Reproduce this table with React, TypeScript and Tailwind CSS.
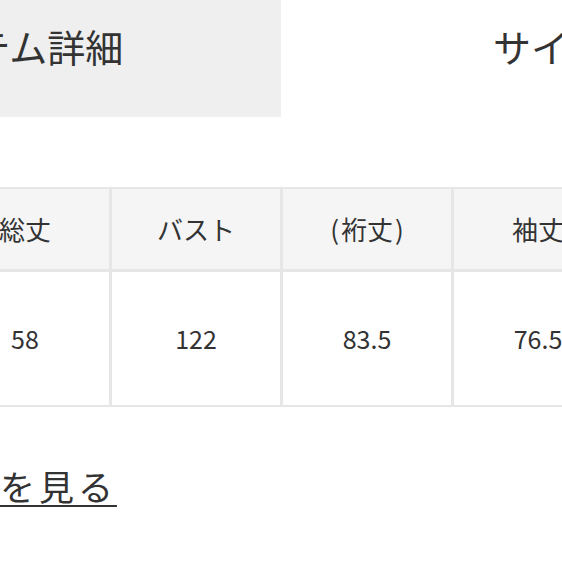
import React from "react";

const headers: React.ReactNode[] = [
  "総丈",
  "バスト",
  <>
    <span className="mr-[2px]">(</span>裄丈<span className="ml-[2px]">)</span>
  </>,
  "袖丈",
  "着丈",
];
const values = ["58", "122", "83.5", "76.5", "60"];

export default function App() {
  return (
    <div className="w-[562px] h-[562px] overflow-hidden bg-white text-[#333] font-['Noto_Sans_CJK_JP','Noto_Sans',sans-serif]">
      <div className="flex h-[117px]">
        <div className="w-[281px] shrink-0 bg-[#efefef] flex items-start pt-[27px] overflow-hidden">
          <span className="ml-[-101px] text-[38px] whitespace-nowrap leading-none">アイテム詳細</span>
        </div>
        <div className="flex-1 flex items-start pt-[27px] overflow-hidden">
          <span className="ml-[212px] text-[38px] whitespace-nowrap leading-none">サイズ</span>
        </div>
      </div>
      <div className="mt-[70px] ml-[-61px] w-max bg-[#e6e6e6] p-[2px] grid grid-cols-[repeat(5,168px)] grid-rows-[80px_133px] gap-[3px]">
        {headers.map((h, i) => (
          <div key={i} className="bg-[#f5f5f5] flex items-center justify-center text-[26px] leading-none">
            {h}
          </div>
        ))}
        {values.map((v, i) => (
          <div key={i} className="bg-white flex items-center justify-center text-[25px] leading-none">
            {v}
          </div>
        ))}
      </div>
      <div className="mt-[59px] ml-[-155px] whitespace-nowrap">
        <span className="text-[35px] tracking-[4px] leading-[40px] underline decoration-2 underline-offset-[4px]">
          サイズ表を見る
        </span>
      </div>
    </div>
  );
}
